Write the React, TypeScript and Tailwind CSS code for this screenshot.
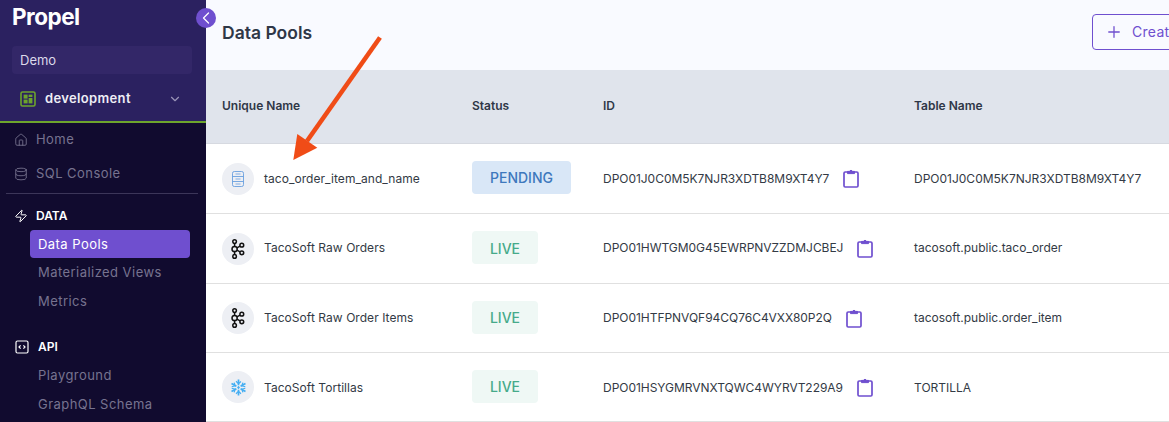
import { ChevronDown, ChevronLeft, Database, Home, Plus, Zap } from 'lucide-react';

const rows = [
    { name: 'taco_order_item_and_name', status: 'PENDING', id: 'DPO01J0C0M5K7NJR3XDTB8M9XT4Y7', table: 'DPO01J0C0M5K7NJR3XDTB8M9XT4Y7', icon: 'pool', h: 'h-[70px]', offset: 'pt-[1px]' },
    { name: 'TacoSoft Raw Orders', status: 'LIVE', id: 'DPO01HWTGM0G45EWRPNVZZDMJCBEJ', table: 'tacosoft.public.taco_order', icon: 'kafka', h: 'h-[70px]', offset: 'pb-[1px]' },
    { name: 'TacoSoft Raw Order Items', status: 'LIVE', id: 'DPO01HTFPNVQF94CQ76C4VXX80P2Q', table: 'tacosoft.public.order_item', icon: 'kafka', h: 'h-[69px]', offset: 'pb-[1px]' },
    { name: 'TacoSoft Tortillas', status: 'LIVE', id: 'DPO01HSYGMRVNXTQWC4WYRVT229A9', table: 'TORTILLA', icon: 'snow', h: 'h-[69px]', offset: 'pt-[1px]' },
];

function PoolIcon() {
    return (
        <svg width="12" height="16" viewBox="0 0 12 16" fill="none" stroke="#6a9fdf" strokeWidth="0.9">
            <rect x="0.5" y="0.5" width="11" height="15" rx="1.8" />
            <path d="M0.5 5.5h11M0.5 10.5h11" />
            <path d="M3.5 3h5M3.5 8h5M3.5 13h5" strokeWidth="0.8" />
        </svg>
    );
}

function KafkaIcon() {
    return (
        <svg width="14" height="20" viewBox="0 0 14 20" fill="none" stroke="#111" strokeWidth="1.5">
            <circle cx="3.6" cy="2.6" r="1.8" />
            <circle cx="3.6" cy="10" r="2.6" />
            <circle cx="3.6" cy="17.4" r="1.8" />
            <circle cx="10.8" cy="6.2" r="1.9" />
            <circle cx="10.8" cy="13.8" r="1.9" />
            <path d="M3.6 4.4v3M3.6 12.6v3M5.9 8.8l3.2-1.7M5.9 11.2l3.2 1.7" />
        </svg>
    );
}

function SnowIcon() {
    return (
        <svg width="17" height="17" viewBox="0 0 18 18" fill="none" stroke="#45aef2" strokeWidth="1.8">
            <path d="M9 0.5v6M9 11.5v6M1.6 4.7l5.2 3M11.2 10.3l5.2 3M1.6 13.3l5.2-3M11.2 7.7l5.2-3" />
            <path d="M6.4 2.4L9 5l2.6-2.4M6.4 15.6L9 13l2.6 2.6M1.8 8.2l3.5-.9-.9-3.5M16.2 9.8l-3.5.9.9 3.5M1.8 9.8l3.5.9-.9 3.5M16.2 8.2l-3.5-.9.9-3.5" strokeWidth="1.3" />
            <path d="M9 7.2L10.6 9 9 10.8 7.4 9z" fill="#45aef2" strokeWidth="0" />
        </svg>
    );
}

function ClipboardIcon() {
    return (
        <svg width="16" height="19" viewBox="0 0 16 19" fill="none" stroke="#6f4fcf" strokeWidth="1.7" className="shrink-0">
            <rect x="1" y="3" width="14" height="15" rx="1.2" />
            <path d="M4.5 4.6V2.4h2a1.6 1.6 0 0 1 3 0h2v2.2z" fill="#6f4fcf" strokeWidth="1" />
        </svg>
    );
}

function EnvIcon() {
    return (
        <svg width="16" height="16" viewBox="0 0 16 16" fill="none" className="shrink-0">
            <rect x="1" y="1" width="14" height="14" rx="1.5" stroke="#6da52c" strokeWidth="1.6" />
            <rect x="3.6" y="3.6" width="4" height="4" fill="#6da52c" />
            <rect x="8.6" y="3.6" width="3.8" height="2.4" fill="#6da52c" />
            <rect x="3.6" y="8.6" width="4" height="3.8" fill="#6da52c" />
            <rect x="8.6" y="7" width="3.8" height="5.4" fill="#6da52c" />
        </svg>
    );
}

function ApiIcon() {
    return (
        <svg width="14" height="14" viewBox="0 0 14 14" fill="none" stroke="#fff" strokeWidth="1.2" className="shrink-0">
            <rect x="1" y="1" width="12" height="12" rx="1.5" />
            <path d="M5.6 5.4L4 7l1.6 1.6M8.4 5.4L10 7 8.4 8.6" />
        </svg>
    );
}

function Sidebar() {
    return (
        <aside className="w-[206px] shrink-0 h-full bg-[#110b2f] flex flex-col">
            <div className="h-[123px] shrink-0 bg-[#2b2160] border-b-2 border-[#6da52c] pl-3">
                <div className="h-[46px] pt-[3px] text-[22.5px] leading-7 font-bold tracking-[-0.5px] text-white">Propel</div>
                <div className="w-[180px] h-7 rounded bg-[#332768] px-2 flex items-center text-[13px] text-[#dcd9ea] pt-[1px]">Demo</div>
                <div className="w-[182px] h-[41px] mt-[4px] pl-2 pr-3 flex items-center text-[13px] font-semibold text-[#eeedf5]">
                    <EnvIcon />
                    <span className="ml-[9px] flex-1 tracking-[0.35px]">development</span>
                    <ChevronDown size={14} className="text-[#9a94b8]" />
                </div>
            </div>

            <div className="h-[34px] pl-[14px] flex items-center gap-2 text-[13px] text-[#77738f] tracking-[0.45px]">
                <Home size={14} strokeWidth={1.5} />
                <span>Home</span>
            </div>
            <div className="h-[34px] pl-[14px] flex items-center gap-2 text-[13px] text-[#77738f] tracking-[0.45px]">
                <Database size={14} strokeWidth={1.5} />
                <span>SQL Console</span>
            </div>
            <div className="ml-[6px] mr-2 mt-[2px] border-t border-[#3c3659]" />

            <div className="h-[42px] pl-[14px] pt-[1px] flex items-center gap-2 text-xs font-semibold text-white">
                <Zap size={14} strokeWidth={1.7} />
                <span>DATA</span>
            </div>
            <div className="ml-[30px] mr-4 mt-[-6px] h-7 pt-[1px] rounded bg-[#6f4fcf] pl-2 flex items-center text-[13px] text-white tracking-[0.45px]">Data Pools</div>
            <div className="ml-[38px] h-[28px] pt-[1px] flex items-center text-[13px] text-[#77738f] tracking-[0.45px]">Materialized Views</div>
            <div className="ml-[38px] h-[29px] pt-[2px] flex items-center text-[13px] text-[#77738f] tracking-[0.45px]">Metrics</div>

            <div className="h-[32px] mt-[16px] pl-[15px] flex items-center gap-[9px] text-xs font-semibold text-white">
                <ApiIcon />
                <span>API</span>
            </div>
            <div className="ml-[38px] h-[29px] mt-[-2px] flex items-center text-[13px] text-[#77738f] tracking-[0.45px]">Playground</div>
            <div className="ml-[38px] h-[29px] flex items-center text-[13px] text-[#77738f] tracking-[0.45px]">GraphQL Schema</div>
        </aside>
    );
}

export default function App() {
    return (
        <div className="relative w-[1169px] h-[422px] overflow-hidden flex bg-white font-['Inter',sans-serif]">
            <Sidebar />

            <main className="flex-1 min-w-0">
                {/* Header */}
                <div className="h-[70px] bg-[#f9faff] pl-4 flex items-center justify-between">
                    <h1 className="text-[17.5px] font-semibold text-[#2f3747] -mt-[4px]">Data Pools</h1>
                    <button className="w-[120px] h-[36px] -mr-[43px] -mt-[6px] shrink-0 rounded border-[1.5px] border-[#6f4fcf] pl-3 flex items-center gap-[9px] text-sm text-[#6f4fcf] tracking-[0.3px]">
                        <Plus size={18} strokeWidth={1.7} />
                        Create
                    </button>
                </div>

                {/* Table */}
                <div className="h-[74px] bg-[#e0e4ec] border-b border-[#d6d9e0] pl-4 pb-[2px] grid grid-cols-[250px_131px_311px_1fr] items-center text-xs font-semibold text-[#2f3747]">
                    <span>Unique Name</span>
                    <span>Status</span>
                    <span>ID</span>
                    <span>Table Name</span>
                </div>

                {rows.map((row) => (
                    <div key={row.name} className={`${row.h} border-b border-[#e0e0e0] pl-4 grid grid-cols-[250px_131px_311px_1fr] items-center text-xs text-[#333a45]`}>
                        <div className="flex items-center gap-[10px]">
                            <div className="w-8 h-8 rounded-full bg-[#edeff4] flex items-center justify-center">
                                {row.icon === 'pool' && <PoolIcon />}
                                {row.icon === 'kafka' && <KafkaIcon />}
                                {row.icon === 'snow' && <SnowIcon />}
                            </div>
                            <span className={`tracking-[0.05px] ${row.offset}`}>{row.name}</span>
                        </div>
                        <div className="flex items-center pb-[2px]">
                            {row.status === 'PENDING' ? (
                                <span className="inline-flex w-[99px] h-[33px] pt-[1px] items-center justify-center rounded bg-[#d9e7f7] text-sm font-medium text-[#3e78bd]">PENDING</span>
                            ) : (
                                <span className="inline-flex w-[66px] h-[33px] pt-[2px] items-center justify-center rounded bg-[#eff8f5] text-sm font-medium text-[#46aa8a]">LIVE</span>
                            )}
                        </div>
                        <div className="flex items-center gap-[14px]">
                            <span className={`tracking-[-0.03px] ${row.offset}`}>{row.id}</span>
                            <ClipboardIcon />
                        </div>
                        <span className={row.offset}>{row.table}</span>
                    </div>
                ))}
            </main>

            {/* Sidebar collapse toggle */}
            <button className="absolute left-[196px] top-2 w-5 h-5 rounded-full bg-[#6f4fcf] flex items-center justify-center text-white">
                <ChevronLeft size={22} strokeWidth={1.5} />
            </button>

            {/* Annotation arrow */}
            <svg className="absolute left-0 top-0 pointer-events-none" width="1169" height="422" fill="none">
                <path d="M380 37.5L307 141" stroke="#f04c17" strokeWidth="4.6" />
                <path d="M293.3 160L297.3 134L317.3 147.7Z" fill="#f04c17" />
            </svg>
        </div>
    );
}
